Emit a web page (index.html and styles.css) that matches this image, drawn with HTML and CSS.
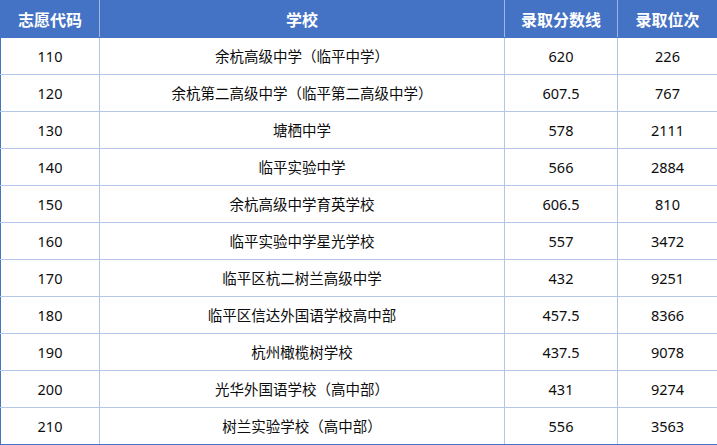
FILE: index.html
```html
<!DOCTYPE html>
<html lang="zh">
<head>
<meta charset="utf-8">
<link rel="stylesheet" href="styles.css">
</head>
<body>
<table class="score-table">
  <colgroup>
    <col class="c-code">
    <col class="c-school">
    <col class="c-score">
    <col class="c-rank">
  </colgroup>
  <thead>
    <tr><th>志愿代码</th><th>学校</th><th>录取分数线</th><th>录取位次</th></tr>
  </thead>
  <tbody>
    <tr><td>110</td><td>余杭高级中学（临平中学）</td><td>620</td><td>226</td></tr>
    <tr><td>120</td><td>余杭第二高级中学（临平第二高级中学）</td><td>607.5</td><td>767</td></tr>
    <tr><td>130</td><td>塘栖中学</td><td>578</td><td>2111</td></tr>
    <tr><td>140</td><td>临平实验中学</td><td>566</td><td>2884</td></tr>
    <tr><td>150</td><td>余杭高级中学育英学校</td><td>606.5</td><td>810</td></tr>
    <tr><td>160</td><td>临平实验中学星光学校</td><td>557</td><td>3472</td></tr>
    <tr><td>170</td><td>临平区杭二树兰高级中学</td><td>432</td><td>9251</td></tr>
    <tr><td>180</td><td>临平区信达外国语学校高中部</td><td>457.5</td><td>8366</td></tr>
    <tr><td>190</td><td>杭州橄榄树学校</td><td>437.5</td><td>9078</td></tr>
    <tr><td>200</td><td>光华外国语学校（高中部）</td><td>431</td><td>9274</td></tr>
    <tr><td>210</td><td>树兰实验学校（高中部）</td><td>556</td><td>3563</td></tr>
  </tbody>
</table>
</body>
</html>
```
FILE: styles.css
```css
html, body {
  margin: 0;
  padding: 0;
  background: #ffffff;
}
body {
  font-family: "Noto Sans", "Noto Sans CJK SC", "Microsoft YaHei", sans-serif;
  color: #0d0d0d;
}
.score-table {
  width: 717px;
  border-collapse: collapse;
  table-layout: fixed;
  border: 1px solid #4472c4;
  border-bottom-width: 2px;
}
.c-code { width: 99px; }
.c-school { width: 405px; }
.c-score { width: 113px; }
.c-rank { width: 100px; }
.score-table th,
.score-table td {
  padding: 0;
  text-align: center;
  vertical-align: middle;
  white-space: nowrap;
  border: 1px solid #b4c6e7;
}
.score-table th {
  height: 36px;
  background: #4472c4;
  color: #ffffff;
  font-family: "Noto Sans CJK SC", sans-serif;
  font-size: 16px;
  font-weight: bold;
  border-color: #4472c4;
  border-right-color: #9fb6e0;
  border-bottom-color: #4472c4;
}
.score-table th:last-child { border-right-color: #4472c4; }
.score-table th:first-child, .score-table td:first-child { border-left-color: #4472c4; }
.score-table td:last-child { border-right-color: #4472c4; }
.score-table td {
  height: 36px;
  font-size: 14.5px;
  line-height: 1;
}
```
